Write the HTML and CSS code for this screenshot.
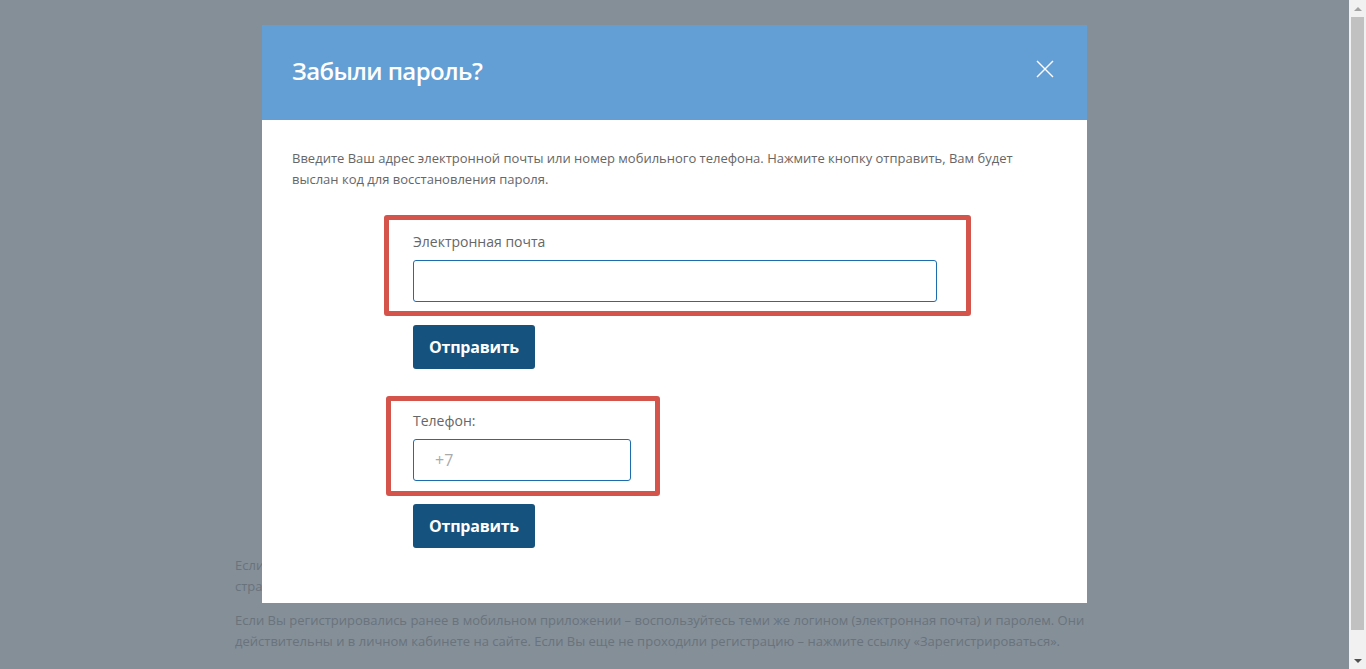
FILE: index.html
```html
<!DOCTYPE html>
<html lang="ru">
<head>
<meta charset="utf-8">
<title>Забыли пароль?</title>
<link rel="stylesheet" href="styles.css">
</head>
<body>
<div class="screen">
  <main class="page">
    <div class="page-text">
      <p>Если Вы уже зарегистрированы на сайте, введите логин и пароль. Если Вы забыли пароль – воспользуйтесь формой<br>страницы восстановления пароля.</p>
      <p>Если Вы регистрировались ранее в мобильном приложении – воспользуйтесь теми же логином (электронная почта) и паролем. Они действительны и в личном кабинете на сайте. Если Вы еще не проходили регистрацию – нажмите ссылку «Зарегистрироваться».</p>
    </div>
    <div class="modal">
      <div class="modal-header">
        <h2 class="modal-title">Забыли пароль?</h2>
        <button class="modal-close" aria-label="Закрыть">
          <svg width="18" height="18" viewBox="0 0 18 18"><path d="M1 1L17 17M17 1L1 17" stroke="#ffffff" stroke-width="1.4" fill="none"/></svg>
        </button>
      </div>
      <div class="modal-body">
        <p class="intro">Введите Ваш адрес электронной почты или номер мобильного телефона. Нажмите кнопку отправить, Вам будет выслан код для восстановления пароля.</p>
        <div class="form">
          <div class="field-box field-email">
            <label class="field-label">Электронная почта</label>
            <input class="field-input input-email" type="text">
          </div>
          <button class="btn btn-first">Отправить</button>
          <div class="field-box field-phone">
            <label class="field-label">Телефон:</label>
            <input class="field-input input-phone" type="text" placeholder="+7">
          </div>
          <button class="btn btn-second">Отправить</button>
        </div>
      </div>
    </div>
  </main>
  <div class="scrollbar">
    <div class="sb-btn"><span class="arrow-up"></span></div>
    <div class="sb-track"><div class="sb-thumb"></div></div>
    <div class="sb-btn"><span class="arrow-down"></span></div>
  </div>
</div>
</body>
</html>
```
FILE: styles.css
```css
* { box-sizing: border-box; }
html, body { margin: 0; padding: 0; height: 100%; overflow: hidden; }
body {
  font-family: "Open Sans", "Noto Sans", sans-serif;
  background: #858f98;
}
.screen {
  display: flex;
  height: 669px;
  width: 1366px;
}
.page {
  position: relative;
  flex: 1;
  background: #858f98;
}
.page-text {
  padding: 555px 0 0 235px;
  width: 1095px;
  color: #69737c;
  font-size: 13px;
  line-height: 21px;
}
.page-text p { margin: 0 0 13px; }

.modal {
  position: absolute;
  left: 262px;
  top: 25px;
  width: 825px;
  height: 578px;
  background: #ffffff;
}
.modal-header {
  height: 95px;
  background: #639fd5;
  display: flex;
  align-items: center;
  justify-content: space-between;
  padding: 0 33px 4px 30px;
}
.modal-title {
  margin: 0;
  color: #ffffff;
  font-size: 24px;
  font-weight: 600;
  letter-spacing: -0.6px;
}
.modal-close {
  background: none;
  border: 0;
  padding: 0;
  width: 18px;
  height: 18px;
  margin-top: -3px;
  display: flex;
}
.modal-body {
  padding: 28px 30px 0;
}
.intro {
  margin: 0;
  color: #666666;
  font-size: 13px;
  line-height: 21px;
}
.form {
  margin-left: 121px;
  display: flex;
  flex-direction: column;
  align-items: flex-start;
  padding-top: 25px;
}
.field-box {
  border: 5px solid #d4534a;
  border-radius: 3px;
  display: flex;
  flex-direction: column;
}
.field-email {
  margin-left: -29px;
  width: 587px;
  padding: 12px 29px 9px 24px;
}
.field-phone {
  margin-left: -27px;
  width: 274px;
  padding: 10px 24px 10px 22px;
  margin-top: 27px;
}
.field-label {
  color: #666666;
  font-size: 14px;
  line-height: 20px;
  margin-bottom: 8px;
}
.field-input {
  height: 42px;
  border: 1px solid #1e6cb0;
  border-radius: 3px;
  font-family: "Open Sans", sans-serif;
  font-size: 16px;
  padding: 0 21px;
  outline: none;
  color: #333;
}
.input-email { width: 524px; }
.input-phone { width: 218px; }
.field-input::placeholder { color: #aaaaaa; }
.btn {
  width: 122px;
  height: 44px;
  background: #16527e;
  border: 0;
  border-radius: 3px;
  color: #ffffff;
  font-family: "Open Sans", sans-serif;
  font-size: 16px;
  font-weight: 700;
  letter-spacing: -0.25px;
  padding: 0;
}
.btn-first { margin-top: 9px; }
.btn-second { margin-top: 8px; }

.scrollbar {
  width: 17px;
  background: #f1f1f1;
  display: flex;
  flex-direction: column;
}
.sb-btn {
  height: 17px;
  display: flex;
  align-items: center;
  justify-content: center;
}
.arrow-up {
  width: 0; height: 0;
  border-left: 4px solid transparent;
  border-right: 4px solid transparent;
  border-bottom: 4px solid #a3a3a3;
}
.arrow-down {
  width: 0; height: 0;
  border-left: 4px solid transparent;
  border-right: 4px solid transparent;
  border-top: 4px solid #505050;
}
.sb-track {
  flex: 1;
  padding: 0 2px;
  display: flex;
}
.sb-thumb {
  flex: 1;
  background: #c1c1c1;
  margin-bottom: 22px;
}
```
